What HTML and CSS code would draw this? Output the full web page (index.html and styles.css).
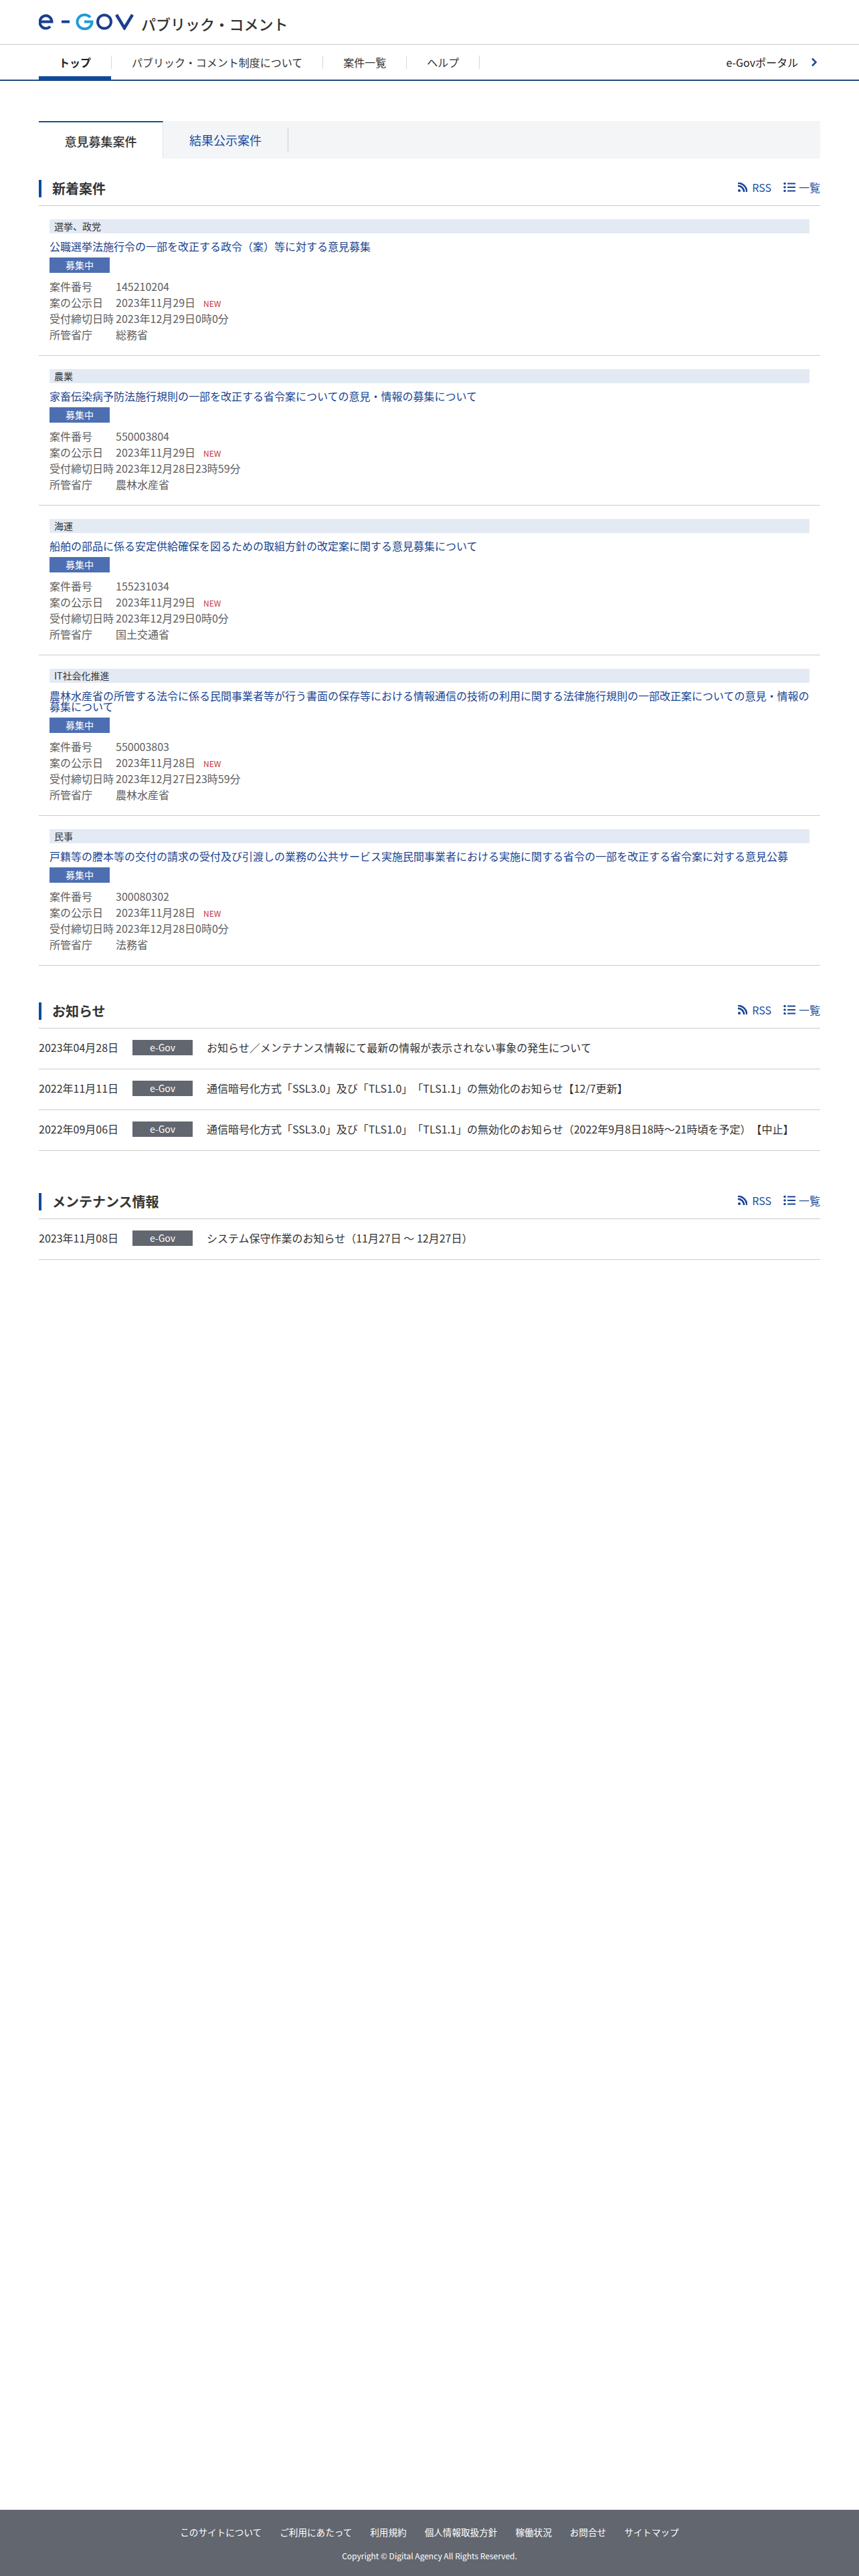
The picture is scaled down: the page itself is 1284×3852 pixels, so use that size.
FILE: index.html
```html
<!DOCTYPE html>
<html lang="ja">
<head>
    <meta charset="UTF-8">
    <meta name="viewport" content="width=device-width, initial-scale=1.0">
    <title>e-Gov パブリック・コメント</title>
    <link rel="stylesheet" href="styles.css">
</head>
<body>
    <header class="site-header">
        <a href="#" class="logo">
            <svg class="logo-img" width="142" height="25" viewBox="0 0 142 25" fill="none" role="img" aria-label="e-Gov">
                <path d="M2 12.500H19.500A9 9.500 0 1 0 17 19.500" stroke="#1b3f8f" stroke-width="4"/>
                <path d="M34 12.500H46" stroke="#1b3f8f" stroke-width="4"/>
                <path d="M77 6A11 10.500 0 1 0 79.500 12.500H68" stroke="#1f9bd7" stroke-width="4"/>
                <ellipse cx="98" cy="12.500" rx="10" ry="10" stroke="#1b3f8f" stroke-width="4"/>
                <path d="M116 2L128 22L140 2" stroke="#1b3f8f" stroke-width="4.500"/>
            </svg>
            <span class="logo-text">パブリック・コメント</span>
        </a>
    </header>

    <nav class="global-nav">
        <ul class="nav-list">
            <li class="nav-item active"><a href="#">トップ</a></li>
            <li class="nav-item"><a href="#">パブリック・コメント制度について</a></li>
            <li class="nav-item"><a href="#">案件一覧</a></li>
            <li class="nav-item"><a href="#">ヘルプ</a></li>
        </ul>
        <a href="#" class="portal-link">
            e-Govポータル
            <svg class="portal-arrow" width="10" height="14" viewBox="0 0 10 14" fill="none">
                <path d="M2 1.500L7.500 7L2 12.500" stroke="#1f4a9c" stroke-width="2.500"/>
            </svg>
        </a>
    </nav>

    <main class="main-content">
        <div class="tabs">
            <a href="#" class="tab active">意見募集案件</a>
            <a href="#" class="tab">結果公示案件</a>
        </div>

        <section class="section">
            <div class="section-head">
                <h2 class="section-title">新着案件</h2>
                <div class="section-links">
                    <a href="#" class="head-link rss-link">
                        <svg class="rss-icon" width="14" height="14" viewBox="0 0 15 15"><circle cx="2.200" cy="12.800" r="2.200" fill="#1a4496"/><path d="M0 5.200A9.800 9.800 0 0 1 9.800 15" fill="none" stroke="#1a4496" stroke-width="2.800"/><path d="M0 0.800A14.200 14.200 0 0 1 14.200 15" fill="none" stroke="#1a4496" stroke-width="2.800"/></svg>
                        RSS
                    </a>
                    <a href="#" class="head-link">
                        <svg class="list-icon" width="18" height="16" viewBox="0 0 18 16"><g fill="#1a4496"><circle cx="2" cy="2.500" r="1.800"/><circle cx="2" cy="8" r="1.800"/><circle cx="2" cy="13.500" r="1.800"/><rect x="6" y="1.500" width="12" height="2"/><rect x="6" y="7" width="12" height="2"/><rect x="6" y="12.500" width="12" height="2"/></g></svg>
                        一覧
                    </a>
                </div>
            </div>

            <article class="case">
                <div class="case-category">選挙、政党</div>
                <a href="#" class="case-title">公職選挙法施行令の一部を改正する政令（案）等に対する意見募集</a>
                <span class="case-status">募集中</span>
                <dl class="case-info">
                    <div class="info-row"><dt>案件番号</dt><dd>145210204</dd></div>
                    <div class="info-row"><dt>案の公示日</dt><dd>2023年11月29日<span class="new-mark">NEW</span></dd></div>
                    <div class="info-row"><dt>受付締切日時</dt><dd>2023年12月29日0時0分</dd></div>
                    <div class="info-row"><dt>所管省庁</dt><dd>総務省</dd></div>
                </dl>
            </article>

            <article class="case">
                <div class="case-category">農業</div>
                <a href="#" class="case-title">家畜伝染病予防法施行規則の一部を改正する省令案についての意見・情報の募集について</a>
                <span class="case-status">募集中</span>
                <dl class="case-info">
                    <div class="info-row"><dt>案件番号</dt><dd>550003804</dd></div>
                    <div class="info-row"><dt>案の公示日</dt><dd>2023年11月29日<span class="new-mark">NEW</span></dd></div>
                    <div class="info-row"><dt>受付締切日時</dt><dd>2023年12月28日23時59分</dd></div>
                    <div class="info-row"><dt>所管省庁</dt><dd>農林水産省</dd></div>
                </dl>
            </article>

            <article class="case">
                <div class="case-category">海運</div>
                <a href="#" class="case-title">船舶の部品に係る安定供給確保を図るための取組方針の改定案に関する意見募集について</a>
                <span class="case-status">募集中</span>
                <dl class="case-info">
                    <div class="info-row"><dt>案件番号</dt><dd>155231034</dd></div>
                    <div class="info-row"><dt>案の公示日</dt><dd>2023年11月29日<span class="new-mark">NEW</span></dd></div>
                    <div class="info-row"><dt>受付締切日時</dt><dd>2023年12月29日0時0分</dd></div>
                    <div class="info-row"><dt>所管省庁</dt><dd>国土交通省</dd></div>
                </dl>
            </article>

            <article class="case">
                <div class="case-category">IT社会化推進</div>
                <a href="#" class="case-title">農林水産省の所管する法令に係る民間事業者等が行う書面の保存等における情報通信の技術の利用に関する法律施行規則の一部改正案についての意見・情報の募集について</a>
                <span class="case-status">募集中</span>
                <dl class="case-info">
                    <div class="info-row"><dt>案件番号</dt><dd>550003803</dd></div>
                    <div class="info-row"><dt>案の公示日</dt><dd>2023年11月28日<span class="new-mark">NEW</span></dd></div>
                    <div class="info-row"><dt>受付締切日時</dt><dd>2023年12月27日23時59分</dd></div>
                    <div class="info-row"><dt>所管省庁</dt><dd>農林水産省</dd></div>
                </dl>
            </article>

            <article class="case">
                <div class="case-category">民事</div>
                <a href="#" class="case-title">戸籍等の謄本等の交付の請求の受付及び引渡しの業務の公共サービス実施民間事業者における実施に関する省令の一部を改正する省令案に対する意見公募</a>
                <span class="case-status">募集中</span>
                <dl class="case-info">
                    <div class="info-row"><dt>案件番号</dt><dd>300080302</dd></div>
                    <div class="info-row"><dt>案の公示日</dt><dd>2023年11月28日<span class="new-mark">NEW</span></dd></div>
                    <div class="info-row"><dt>受付締切日時</dt><dd>2023年12月28日0時0分</dd></div>
                    <div class="info-row"><dt>所管省庁</dt><dd>法務省</dd></div>
                </dl>
            </article>
        </section>

        <section class="section news-section">
            <div class="section-head">
                <h2 class="section-title">お知らせ</h2>
                <div class="section-links">
                    <a href="#" class="head-link rss-link">
                        <svg class="rss-icon" width="14" height="14" viewBox="0 0 15 15"><circle cx="2.200" cy="12.800" r="2.200" fill="#1a4496"/><path d="M0 5.200A9.800 9.800 0 0 1 9.800 15" fill="none" stroke="#1a4496" stroke-width="2.800"/><path d="M0 0.800A14.200 14.200 0 0 1 14.200 15" fill="none" stroke="#1a4496" stroke-width="2.800"/></svg>
                        RSS
                    </a>
                    <a href="#" class="head-link">
                        <svg class="list-icon" width="18" height="16" viewBox="0 0 18 16"><g fill="#1a4496"><circle cx="2" cy="2.500" r="1.800"/><circle cx="2" cy="8" r="1.800"/><circle cx="2" cy="13.500" r="1.800"/><rect x="6" y="1.500" width="12" height="2"/><rect x="6" y="7" width="12" height="2"/><rect x="6" y="12.500" width="12" height="2"/></g></svg>
                        一覧
                    </a>
                </div>
            </div>
            <div class="news-row">
                <span class="news-date">2023年04月28日</span>
                <span class="news-tag">e-Gov</span>
                <a href="#" class="news-text">お知らせ／メンテナンス情報にて最新の情報が表示されない事象の発生について</a>
            </div>
            <div class="news-row">
                <span class="news-date">2022年11月11日</span>
                <span class="news-tag">e-Gov</span>
                <a href="#" class="news-text">通信暗号化方式「SSL3.0」及び「TLS1.0」「TLS1.1」の無効化のお知らせ【12/7更新】</a>
            </div>
            <div class="news-row">
                <span class="news-date">2022年09月06日</span>
                <span class="news-tag">e-Gov</span>
                <a href="#" class="news-text">通信暗号化方式「SSL3.0」及び「TLS1.0」「TLS1.1」の無効化のお知らせ（2022年9月8日18時～21時頃を予定）【中止】</a>
            </div>
        </section>

        <section class="section">
            <div class="section-head">
                <h2 class="section-title">メンテナンス情報</h2>
                <div class="section-links">
                    <a href="#" class="head-link rss-link">
                        <svg class="rss-icon" width="14" height="14" viewBox="0 0 15 15"><circle cx="2.200" cy="12.800" r="2.200" fill="#1a4496"/><path d="M0 5.200A9.800 9.800 0 0 1 9.800 15" fill="none" stroke="#1a4496" stroke-width="2.800"/><path d="M0 0.800A14.200 14.200 0 0 1 14.200 15" fill="none" stroke="#1a4496" stroke-width="2.800"/></svg>
                        RSS
                    </a>
                    <a href="#" class="head-link">
                        <svg class="list-icon" width="18" height="16" viewBox="0 0 18 16"><g fill="#1a4496"><circle cx="2" cy="2.500" r="1.800"/><circle cx="2" cy="8" r="1.800"/><circle cx="2" cy="13.500" r="1.800"/><rect x="6" y="1.500" width="12" height="2"/><rect x="6" y="7" width="12" height="2"/><rect x="6" y="12.500" width="12" height="2"/></g></svg>
                        一覧
                    </a>
                </div>
            </div>
            <div class="news-row">
                <span class="news-date">2023年11月08日</span>
                <span class="news-tag">e-Gov</span>
                <a href="#" class="news-text">システム保守作業のお知らせ（11月27日 ～ 12月27日）</a>
            </div>
        </section>
    </main>

    <footer class="site-footer">
        <ul class="footer-links">
            <li><a href="#">このサイトについて</a></li>
            <li><a href="#">ご利用にあたって</a></li>
            <li><a href="#">利用規約</a></li>
            <li><a href="#">個人情報取扱方針</a></li>
            <li><a href="#">稼働状況</a></li>
            <li><a href="#">お問合せ</a></li>
            <li><a href="#">サイトマップ</a></li>
        </ul>
        <p class="copyright">Copyright © Digital Agency All Rights Reserved.</p>
    </footer>
</body>
</html>
```

FILE: styles.css
```css
* {
    margin: 0;
    padding: 0;
    box-sizing: border-box;
}

body {
    font-family: "Noto Sans CJK JP", "Noto Sans", sans-serif;
    font-size: 16px;
    color: #333;
    background: #fff;
    min-height: 100vh;
    display: flex;
    flex-direction: column;
    text-spacing-trim: space-all;
}

a {
    text-decoration: none;
    color: inherit;
}

ul {
    list-style: none;
}

/* ヘッダー */
.site-header {
    height: 66px;
    padding: 20px 58px 0;
}

.logo {
    display: flex;
    align-items: center;
    height: 25px;
}

.logo-img {
    display: block;
}

.logo-text {
    margin-left: 11px;
    font-size: 22px;
    font-weight: 500;
    line-height: 25px;
    color: #333;
    position: relative;
    top: 3px;
}

/* ナビ */
.global-nav {
    height: 55px;
    padding: 0 58px;
    border-top: 1px solid #ccc;
    border-bottom: 2px solid #1f4a7c;
    display: flex;
    justify-content: space-between;
}

.nav-list {
    display: flex;
    padding-top: 16px;
}

.nav-item {
    height: 20px;
    line-height: 20px;
    padding: 0 30px;
    border-right: 1px solid #d8d8d8;
    position: relative;
    color: #333;
}

.nav-item.active {
    font-weight: 700;
    color: #222;
}

.nav-item.active::after {
    content: "";
    position: absolute;
    left: 0;
    right: 0;
    top: 31px;
    height: 6px;
    background: #0f4a9c;
}

.portal-link {
    display: flex;
    align-items: center;
    gap: 19px;
    height: 52px;
    color: #222;
    padding-right: 4px;
}

/* タブ */
.main-content {
    padding: 60px 58px 0;
}

.tabs {
    display: flex;
    height: 56px;
    background: #f3f5f7;
}

.tab {
    width: 187px;
    font-size: 18px;
    line-height: 36px;
    height: 36px;
    margin-top: 10px;
    text-align: center;
    color: #1a4a9e;
    border-right: 1px solid #ccc;
}

.tab.active {
    width: 186px;
    height: 56px;
    margin-top: 0;
    line-height: 50px;
    padding-top: 3px;
    color: #333;
    font-weight: 500;
    background: #fff;
    border-top: 2px solid #1a4e8e;
    border-right: 1px solid #e2e2e2;
}

/* 見出し */
.section {
    margin-top: 32px;
}

.section + .section {
    margin-top: 55px;
}

.news-section + .section {
    margin-top: 63px;
}

.section-head {
    display: flex;
    justify-content: space-between;
    align-items: center;
    height: 39px;
    padding-bottom: 12px;
    border-bottom: 1px solid #ccc;
}

.section-title {
    height: 26px;
    line-height: 26px;
    padding-left: 16px;
    font-size: 20px;
    font-weight: 700;
    color: #333;
    border-left: 4px solid #0f4a9c;
}

.section-links {
    display: flex;
    gap: 18px;
    position: relative;
    top: -2px;
}

.head-link {
    display: flex;
    align-items: center;
    gap: 5px;
    line-height: 24px;
    color: #1f4e9e;
}

.rss-link {
    gap: 7px;
}

/* 案件 */
.case {
    padding: 20px 16px 19px;
    border-bottom: 1px solid #ccc;
}

.case-category {
    height: 21px;
    line-height: 21px;
    padding-left: 7px;
    font-size: 14px;
    color: #333;
    background: #e4eaf3;
}

.case-title {
    display: block;
    margin-top: 11px;
    line-height: 16px;
    color: #1a4490;
}

.case-status {
    display: block;
    width: 90px;
    height: 23px;
    line-height: 22px;
    margin-top: 9px;
    font-size: 14px;
    text-align: center;
    color: #fff;
    background: #4d6fb2;
}

.case-info {
    margin-top: 8px;
    line-height: 24px;
    color: #606060;
}

.info-row {
    display: flex;
    height: 24px;
}

.info-row dt {
    width: 99px;
}

.new-mark {
    margin-left: 12px;
    font-size: 12px;
    line-height: 1;
    color: #c8323c;
}

/* お知らせ */
.news-row {
    display: flex;
    align-items: center;
    height: 61px;
    padding-bottom: 4px;
    border-bottom: 1px solid #ccc;
}

.news-date {
    width: 140px;
    color: #333;
}

.news-tag {
    width: 90px;
    height: 23px;
    line-height: 22px;
    font-size: 14px;
    text-align: center;
    color: #fff;
    background: #62666f;
}

.news-text {
    margin-left: 21px;
    color: #333;
}

/* フッター */
.site-footer {
    margin-top: auto;
    height: 99px;
    padding-top: 23px;
    text-align: center;
    color: #fff;
    background: #62666f;
}

.footer-links {
    display: flex;
    justify-content: center;
    gap: 27px;
    font-size: 13.6px;
    line-height: 20px;
}

.copyright {
    margin-top: 17px;
    font-size: 12px;
    line-height: 18px;
}
```
